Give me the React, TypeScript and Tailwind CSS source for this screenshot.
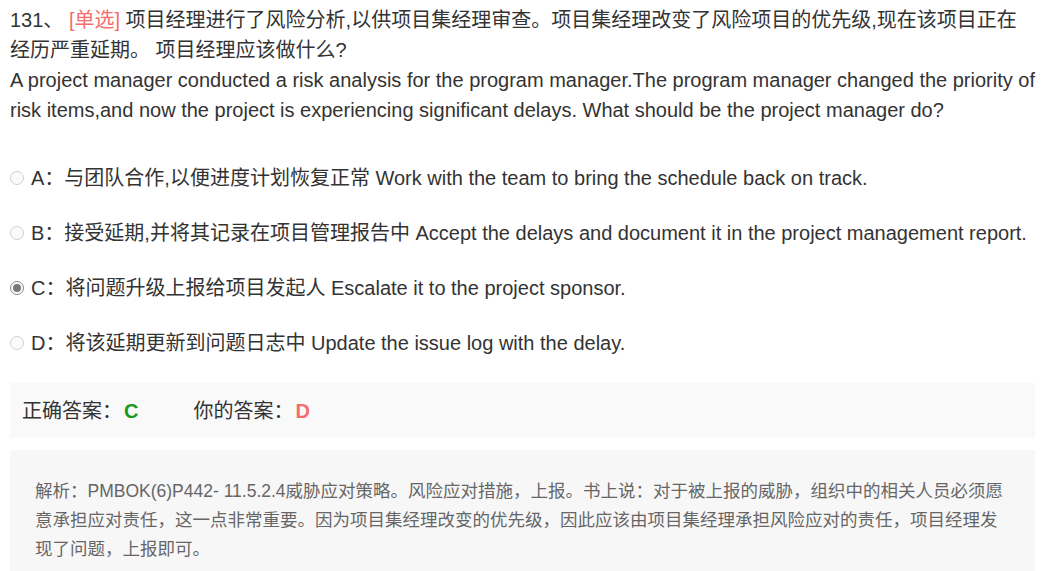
import React from "react";

const font = { fontFamily: '"Liberation Sans", Arial, "Noto Sans CJK SC", sans-serif' };

function Radio({ checked }: { checked?: boolean }) {
  return (
    <span
      className={`inline-flex items-center justify-center w-[14px] h-[14px] rounded-full border ${checked ? "border-[#8a8a8a]" : "border-[#d0d0d0]"} bg-[#fbfbfb] mr-[7px] shrink-0`}
    >
      {checked && <span className="w-[8px] h-[8px] rounded-full bg-[#777]" />}
    </span>
  );
}

const options = [
  { k: "A", t: "与团队合作,以便进度计划恢复正常 Work with the team to bring the schedule back on track." },
  { k: "B", t: "接受延期,并将其记录在项目管理报告中 Accept the delays and document it in the project management report." },
  { k: "C", t: "将问题升级上报给项目发起人 Escalate it to the project sponsor.", checked: true },
  { k: "D", t: "将该延期更新到问题日志中 Update the issue log with the delay." },
];

export default function App() {
  return (
    <div className="w-[1042px] h-[571px] overflow-hidden bg-white text-[#333] pl-[10px] pr-[4px] pt-[5px]" style={font}>
      <div className="text-[20px] leading-[30px]">
        <div className="w-[1020px]">
          131、 <span className="text-[#f56c6c]">[单选]</span> 项目经理进行了风险分析,以供项目集经理审查。项目集经理改变了风险项目的优先级,现在该项目正在经历严重延期。 项目经理应该做什么?
        </div>
        <div>
          A project manager conducted a risk analysis for the program manager.The program manager changed the priority of risk items,and now the project is experiencing significant delays. What should be the project manager do?
        </div>
      </div>
      <div className="mt-[38px] flex flex-col gap-[25px]">
        {options.map((o) => (
          <div key={o.k} className="flex items-center h-[30px] text-[20px] whitespace-nowrap">
            <Radio checked={o.checked} />
            <span>{o.k}：{o.t}</span>
          </div>
        ))}
      </div>
      <div className="mt-[25px] w-[1025px] h-[55px] bg-[#f9f9f9] flex items-center pl-[12px] text-[20px]">
        <span>正确答案：</span>
        <span className="text-[#1a9a1a] font-bold ml-[2px]">C</span>
        <span className="ml-[55px]">你的答案：</span>
        <span className="text-[#f56c6c] font-bold ml-[2px]">D</span>
      </div>
      <div className="mt-[12px] w-[1025px] h-[140px] bg-[#f7f7f7] pl-[25px] pr-[24px] pt-[27px] text-[17.5px] leading-[29px] text-[#666]">
        解析：PMBOK(6)P442- 11.5.2.4威胁应对策略。风险应对措施，上报。书上说：对于被上报的威胁，组织中的相关人员必须愿意承担应对责任，这一点非常重要。因为项目集经理改变的优先级，因此应该由项目集经理承担风险应对的责任，项目经理发现了问题，上报即可。
      </div>
    </div>
  );
}
